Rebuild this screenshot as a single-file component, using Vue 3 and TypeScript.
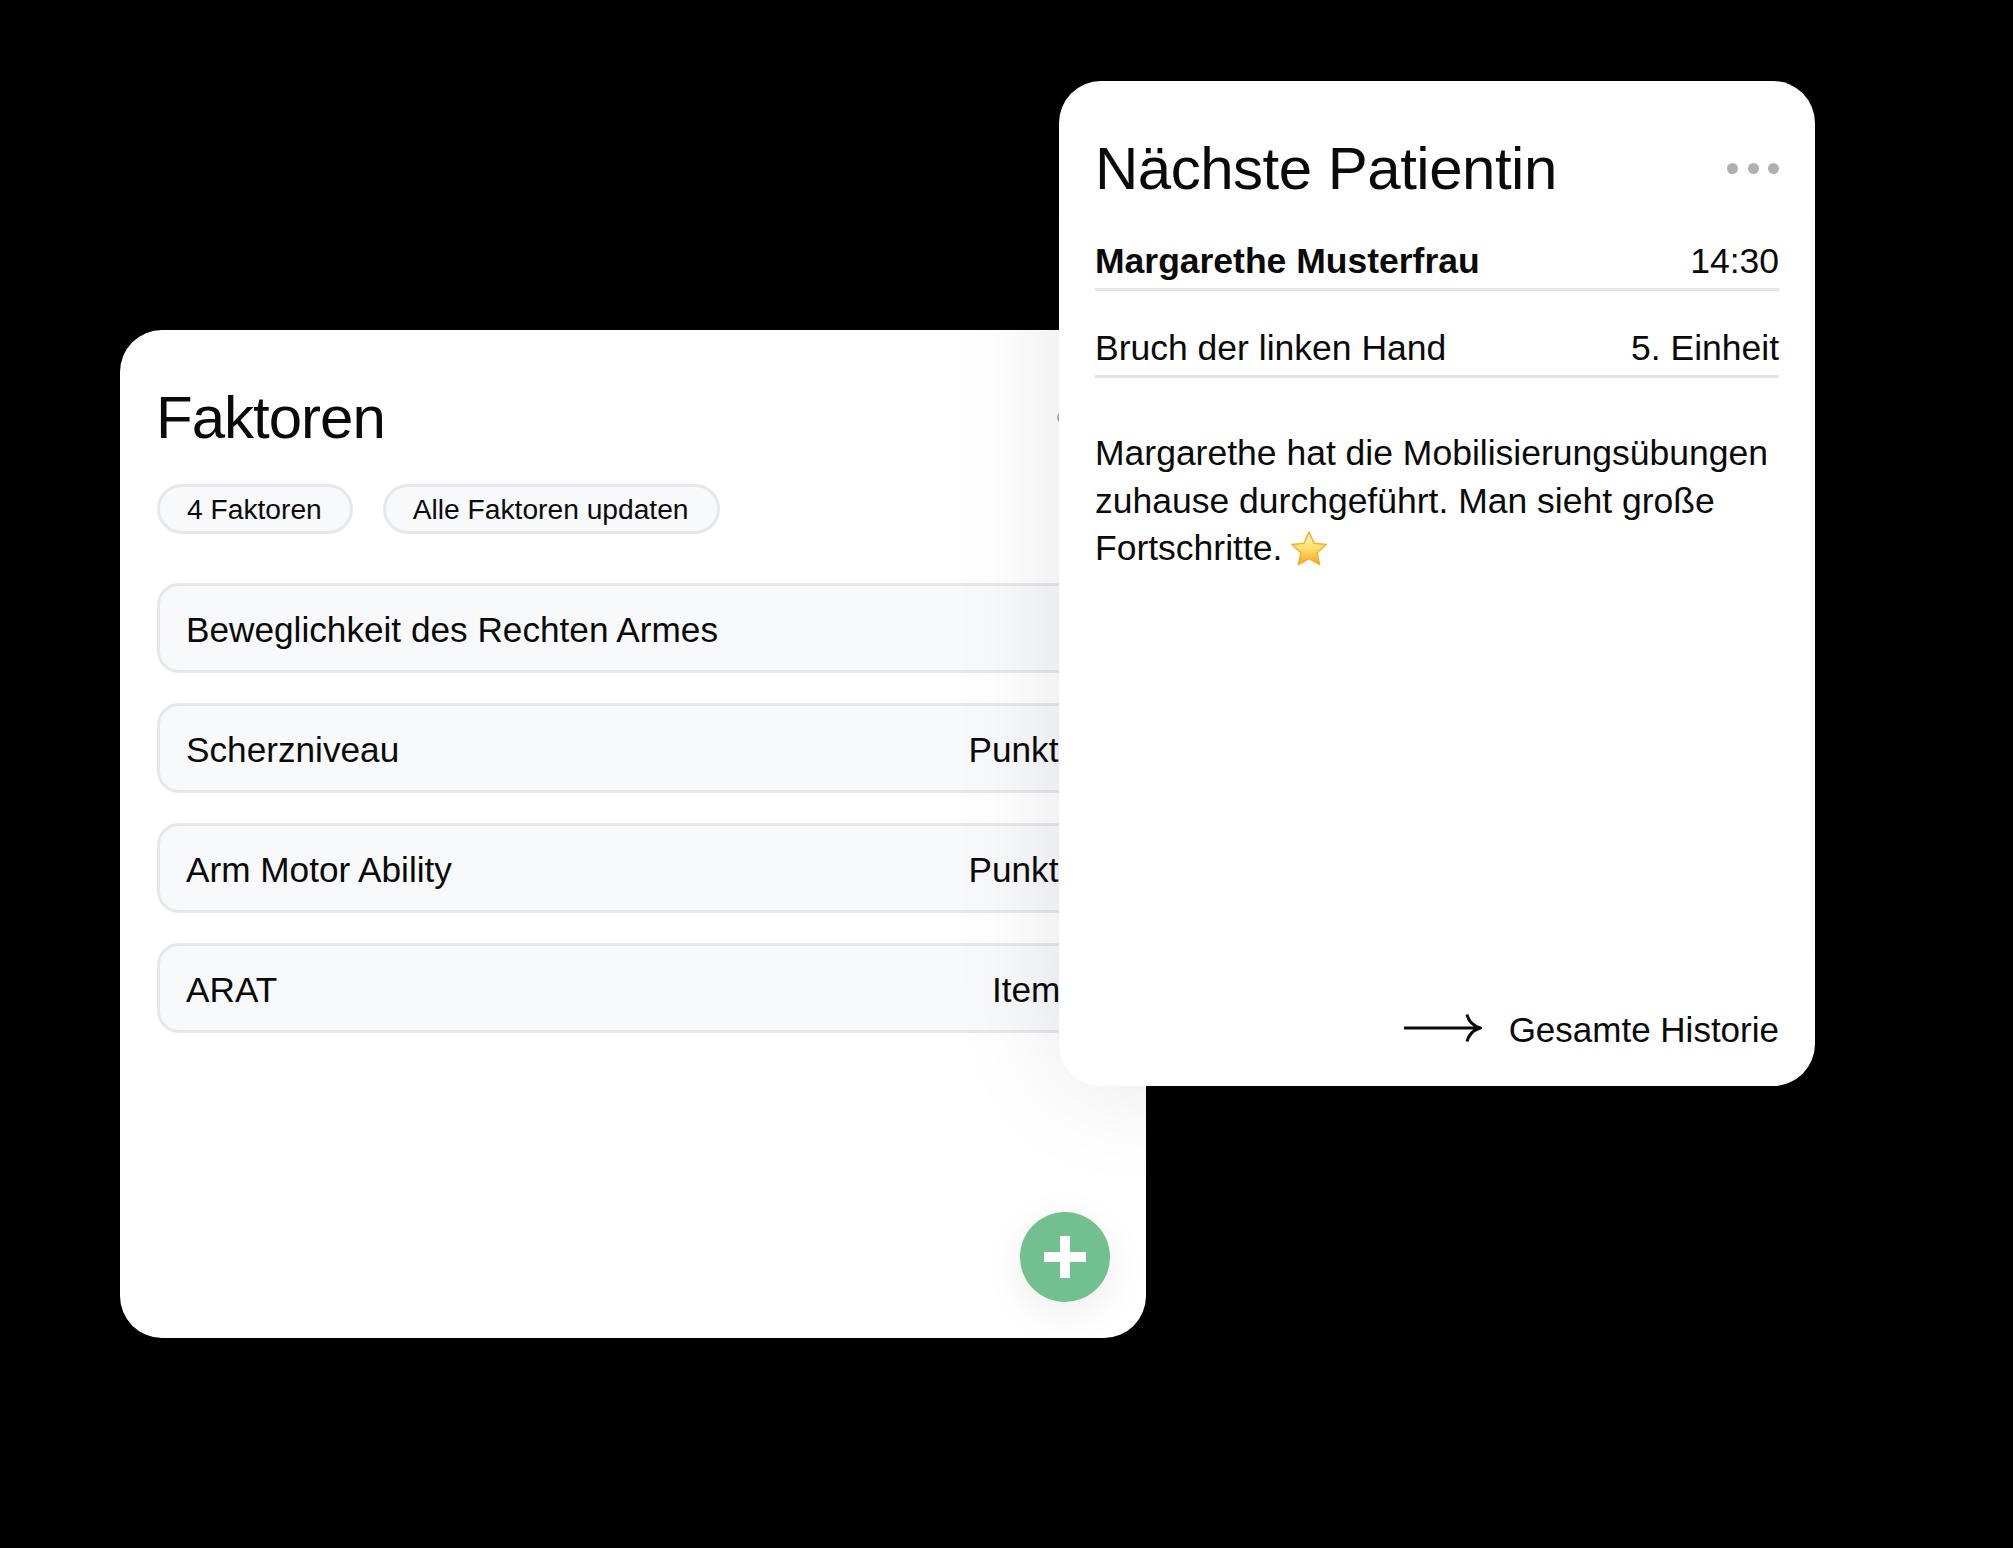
<script setup lang="ts">
interface Factor {
  name: string
  unit?: string
}

const pills: string[] = ['4 Faktoren', 'Alle Faktoren updaten']

const factors: Factor[] = [
  { name: 'Beweglichkeit des Rechten Armes' },
  { name: 'Scherzniveau', unit: 'Punkte' },
  { name: 'Arm Motor Ability', unit: 'Punkte' },
  { name: 'ARAT', unit: 'Items' },
]
</script>

<template>
  <main class="stage">
    <section class="card factors">
      <header class="card-head">
        <h2>Faktoren</h2>
        <div class="dots"><i></i><i></i><i></i></div>
      </header>

      <div class="pills">
        <span v-for="pill in pills" :key="pill" class="pill">{{ pill }}</span>
      </div>

      <ul class="factor-list">
        <li v-for="factor in factors" :key="factor.name">
          <span>{{ factor.name }}</span>
          <span v-if="factor.unit">{{ factor.unit }}</span>
        </li>
      </ul>

      <button class="add" type="button" aria-label="Faktor hinzufügen">
        <svg width="44" height="44" viewBox="0 0 44 44">
          <path d="M17 1h10v16h16v10H27v16H17V27H1V17h16z" fill="#fff" />
        </svg>
      </button>
    </section>

    <section class="card patient">
      <header class="card-head">
        <h2>Nächste Patientin</h2>
        <div class="dots"><i></i><i></i><i></i></div>
      </header>

      <div class="line first">
        <strong>Margarethe Musterfrau</strong>
        <span>14:30</span>
      </div>
      <div class="line">
        <span>Bruch der linken Hand</span>
        <span>5. Einheit</span>
      </div>

      <p class="note">
        Margarethe hat die Mobilisierungsübungen zuhause durchgeführt. Man sieht große
        Fortschritte.
        <svg class="star" width="38" height="36" viewBox="0 0 38 36">
          <defs>
            <linearGradient id="star-fill" x1="0" y1="0" x2="0" y2="1">
              <stop offset="0" stop-color="#fff6c9" />
              <stop offset="0.5" stop-color="#ffdf6b" />
              <stop offset="1" stop-color="#f5a41f" />
            </linearGradient>
          </defs>
          <path
            d="M19 2l5 11.200 12.200 1.300-9.100 8.200 2.600 12-10.700-6.200-10.700 6.200 2.600-12-9.100-8.200L14 13.200z"
            fill="url(#star-fill)"
            stroke="#f0b030"
            stroke-width="1.500"
            stroke-linejoin="round"
          />
        </svg>
      </p>

      <a class="history">
        <svg width="78" height="30" viewBox="0 0 78 30">
          <path
            d="M0 15h75M63 1.500c1.500 6.500 5.500 11 13 13.500-7.500 2.500-11.500 7-13 13.500"
            fill="none"
            stroke="#0a0a0a"
            stroke-width="3"
          />
        </svg>
        <span>Gesamte Historie</span>
      </a>
    </section>
  </main>
</template>

<style>
html,
body {
  margin: 0;
  background: #000;
}
</style>

<style scoped>
.stage {
  position: relative;
  width: 2013px;
  height: 1548px;
  overflow: hidden;
  background: #000;
  color: #0a0a0a;
  font-family: "Liberation Sans", Arial, sans-serif;
}

.card {
  position: absolute;
  box-sizing: border-box;
  display: flex;
  flex-direction: column;
  background: #fff;
  border-radius: 42px;
  padding: 0 36px;
}

.factors {
  left: 120px;
  top: 330px;
  width: 1026px;
  height: 1008px;
  padding-right: 37px;
}

.patient {
  left: 1059px;
  top: 81px;
  width: 756px;
  height: 1005px;
  box-shadow: 0 0 110px rgba(20, 20, 40, 0.1);
}

.card-head {
  display: flex;
  align-items: center;
  justify-content: space-between;
  height: 60px;
  margin-top: 57px;
}

.card-head h2 {
  margin: 0;
  font-size: 60px;
  font-weight: 400;
  letter-spacing: -0.5px;
}

.factors .card-head h2 {
  letter-spacing: -1px;
}

.dots {
  display: flex;
  gap: 9.5px;
}

.dots i {
  width: 11px;
  height: 11px;
  border-radius: 50%;
  background: #b0b0b0;
}

.pills {
  display: flex;
  gap: 30px;
  margin-top: 37px;
  margin-left: 1px;
}

.pill {
  box-sizing: border-box;
  display: flex;
  align-items: center;
  height: 50px;
  padding: 0 28px 0 27px;
  border: 3px solid #e6e7ea;
  border-radius: 25px;
  background: #f8f9fb;
  font-size: 28.200px;
}

.factor-list {
  display: flex;
  flex-direction: column;
  gap: 30px;
  margin: 49px 0 0 1px;
  padding: 0;
  list-style: none;
}

.factor-list li {
  box-sizing: border-box;
  display: flex;
  align-items: center;
  justify-content: space-between;
  height: 90px;
  padding: 3px 28px 0 26px;
  border: 3px solid #e6e7ea;
  border-radius: 22px;
  background: #f8f9fb;
  font-size: 35.200px;
}

.add {
  position: absolute;
  right: 36px;
  bottom: 36px;
  display: grid;
  place-content: center;
  width: 90px;
  height: 90px;
  padding: 0;
  border: 0;
  border-radius: 50%;
  background: #72c08f;
  box-shadow: 0 10px 40px rgba(0, 0, 0, 0.08);
}

.line {
  box-sizing: border-box;
  display: flex;
  justify-content: space-between;
  align-items: flex-end;
  height: 87px;
  padding-bottom: 6px;
  border-bottom: 3px solid #e4e4e6;
  font-size: 35.500px;
  line-height: 42px;
}

.first {
  margin-top: 6px;
}

.first strong {
  font-weight: 700;
}

.note {
  margin: 52px 0 0;
  font-size: 35.500px;
  line-height: 47.500px;
}

.star {
  vertical-align: -6px;
  margin-left: -2px;
}

.history {
  display: flex;
  align-items: center;
  justify-content: flex-end;
  gap: 27px;
  margin-top: auto;
  margin-bottom: 36px;
  font-size: 35px;
}

.history svg {
  margin-bottom: 5px;
}
</style>
